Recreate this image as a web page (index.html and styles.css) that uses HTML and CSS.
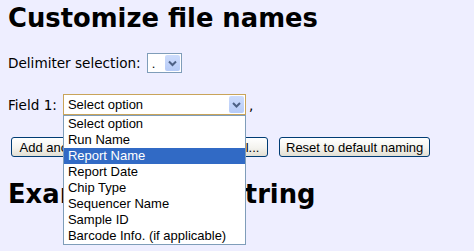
FILE: index.html
```html
<!DOCTYPE html>
<html lang="en">
<head>
    <meta charset="UTF-8">
    <title>Customize file names</title>
    <link rel="stylesheet" href="styles.css">
</head>
<body>
    <h1 class="title">Customize file names</h1>

    <div class="row delim-row">
        <span class="label">Delimiter selection:</span>
        <div class="combo combo-small">
            <span class="combo-value">.</span>
            <span class="combo-btn">
                <svg width="15" height="16" viewBox="0 0 15 16"><path d="M4 6.5l3.5 3.5 3.5-3.5" stroke="#4d6185" stroke-width="2" fill="none"/></svg>
            </span>
        </div>
    </div>

    <div class="row field-row">
        <span class="label">Field 1:</span>
        <div class="combo combo-wide">
            <span class="combo-value">Select option</span>
            <span class="combo-btn">
                <svg width="15" height="17" viewBox="0 0 15 17"><path d="M4 7l3.5 3.5 3.5-3.5" stroke="#4d6185" stroke-width="2" fill="none"/></svg>
            </span>
            <ul class="combo-list">
                <li>Select option</li>
                <li>Run Name</li>
                <li class="active">Report Name</li>
                <li>Report Date</li>
                <li>Chip Type</li>
                <li>Sequencer Name</li>
                <li>Sample ID</li>
                <li>Barcode Info. (if applicable)</li>
            </ul>
        </div>
        <span class="comma">,</span>
    </div>

    <div class="actions">
        <button class="btn btn-add">Add another field to your file name label...</button>
        <button class="btn">Reset to default naming</button>
    </div>

    <h1 class="title subtitle">Example name string</h1>

    <svg class="cursor" width="13" height="21" viewBox="0 0 13 21">
        <path d="M0.5 0.5v16l4-4 3 7 2-1-3-6.5h5.5z" fill="#fff" stroke="#000" stroke-width="1"/>
    </svg>
</body>
</html>
```

FILE: styles.css
```css
html {
    height: 100%;
}
body {
    margin: 0;
    min-height: 100%;
    box-sizing: border-box;
    padding: 2px 8px 0;
    background-color: #eeeeff;
    font-family: "DejaVu Sans", sans-serif;
    font-size: 13.6px;
    color: #000;
}
.title {
    margin: 0;
    font-size: 25.8px;
    line-height: 32px;
    font-weight: bold;
}
.subtitle {
    margin-top: 21px;
}
.row {
    display: flex;
    align-items: center;
}
.delim-row {
    margin-top: 19px;
    height: 20px;
}
.field-row {
    margin-top: 21px;
    height: 21px;
}
.label {
    margin-right: 6px;
}
.combo {
    position: relative;
    box-sizing: border-box;
    height: 100%;
    display: flex;
    align-items: center;
    border: 1px solid #7f9db9;
    background: #fff;
    font-family: "Liberation Sans", Arial, sans-serif;
    font-size: 13px;
}
.combo-small {
    width: 35px;
}
.combo-wide {
    width: 183px;
    border-color: #c9a45a;
}
.combo-value {
    flex: 1;
    padding-left: 4px;
    white-space: nowrap;
}
.combo-btn {
    align-self: stretch;
    width: 15px;
    margin: 1px;
    border-radius: 2px;
    background: linear-gradient(#cddcfc, #b6cbf7);
    display: flex;
}
.combo-list {
    position: absolute;
    z-index: 5;
    left: -1px;
    top: calc(100% + 1px);
    width: 183px;
    box-sizing: border-box;
    margin: 0;
    padding: 0;
    list-style: none;
    border: 1px solid #7f9db9;
    background: #fff;
}
.combo-list li {
    height: 16px;
    line-height: 16px;
    padding-left: 4px;
    white-space: nowrap;
}
.combo-list li.active {
    background: #316ac5;
    color: #fff;
}
.comma {
    margin-left: 3px;
}
.actions {
    display: flex;
    gap: 11px;
    margin-top: 22px;
    padding-left: 3px;
}
.btn {
    height: 20px;
    box-sizing: border-box;
    padding: 0 6px;
    border: 1px solid #003c74;
    border-radius: 3px;
    background: linear-gradient(#ffffff, #f4f3ee 55%, #e2dfd3);
    font-family: "Liberation Sans", Arial, sans-serif;
    font-size: 13px;
    color: #000;
    white-space: nowrap;
}
.btn-add {
    width: 257px;
}
.cursor {
    position: absolute;
    left: 212px;
    top: 157px;
}
```
